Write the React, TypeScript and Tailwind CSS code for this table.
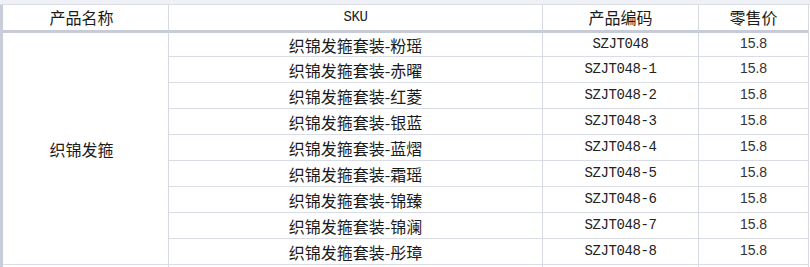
import React from "react";

const variants = ["粉瑶", "赤曜", "红菱", "银蓝", "蓝熠", "霜瑶", "锦臻", "锦澜", "彤璋"];

const rows = variants.map((v, i) => ({
  sku: `织锦发箍套装-${v}`,
  code: i === 0 ? "SZJT048" : `SZJT048-${i}`,
  price: "15.8",
}));

const cjk = "font-['Noto_Sans_CJK_SC',sans-serif]";
const mono = "font-['Liberation_Mono','Noto_Sans_CJK_SC',monospace]";

export default function App() {
  return (
    <div className="w-[810px] h-[267px] bg-white overflow-hidden text-[#1a1a1a]">
      {/* top strip */}
      <div className="h-[5px] bg-[#eef0f5] border-b border-[#dcdee7]" />
      <div className="flex">
        <div className="w-[3px] h-[262px] bg-[#c9ccd9] shrink-0" />
        <div className="grid grid-cols-[166px_374px_156px_110px] auto-rows-min">
          {/* header */}
          <div className={`h-[28px] border-b-[3px] border-b-[#c7cad7] border-r border-r-[#d6d8e2] flex items-center justify-center pr-[8px] pb-[1px] text-[16px] ${cjk}`}>
            产品名称
          </div>
          <div className={`h-[28px] border-b-[3px] border-b-[#c7cad7] border-r border-r-[#d6d8e2] flex items-center justify-center text-[14px] tracking-[-0.4px] text-[#222] ${mono}`}>
            SKU
          </div>
          <div className={`h-[28px] border-b-[3px] border-b-[#c7cad7] border-r border-r-[#d6d8e2] flex items-center justify-center pb-[1px] text-[16px] ${cjk}`}>
            产品编码
          </div>
          <div className={`h-[28px] border-b-[3px] border-b-[#c7cad7] border-r border-r-[#d6d8e2] flex items-center justify-center pb-[1px] text-[16px] ${cjk}`}>
            零售价
          </div>

          {/* merged product name */}
          <div
            className={`border-b border-b-[#d9dbe5] border-r border-r-[#d6d8e2] flex items-center justify-center pr-[8px] text-[16px] ${cjk}`}
            style={{ gridRow: "2 / span 9", gridColumn: "1" }}
          >
            织锦发箍
          </div>

          {rows.map((r, i) => (
            <React.Fragment key={r.code}>
              <div
                className={`${i === 0 ? "h-[24px]" : "h-[26px]"} border-b border-b-[#d9dbe5] border-r border-r-[#d6d8e2] flex items-center justify-center text-[16px] ${cjk}`}
                style={{ gridColumn: "2" }}
              >
                {r.sku}
              </div>
              <div
                className={`${i === 0 ? "h-[24px]" : "h-[26px]"} border-b border-b-[#d9dbe5] border-r border-r-[#d6d8e2] flex items-center justify-center text-[14px] tracking-[-0.4px] text-[#222] ${mono}`}
              >
                {r.code}
              </div>
              <div
                className={`${i === 0 ? "h-[24px]" : "h-[26px]"} border-b border-b-[#d9dbe5] border-r border-r-[#d6d8e2] flex items-center justify-center pb-[3px] text-[14px] text-[#333] font-['Liberation_Sans',Arial,sans-serif]`}
              >
                {r.price}
              </div>
            </React.Fragment>
          ))}

          {/* partial row below */}
          <div className="h-[4px] border-r border-r-[#d6d8e2]" />
          <div className="h-[4px] border-r border-r-[#d6d8e2]" />
          <div className="h-[4px] border-r border-r-[#d6d8e2]" />
          <div className="h-[4px] border-r border-r-[#d6d8e2]" />
        </div>
      </div>
    </div>
  );
}
